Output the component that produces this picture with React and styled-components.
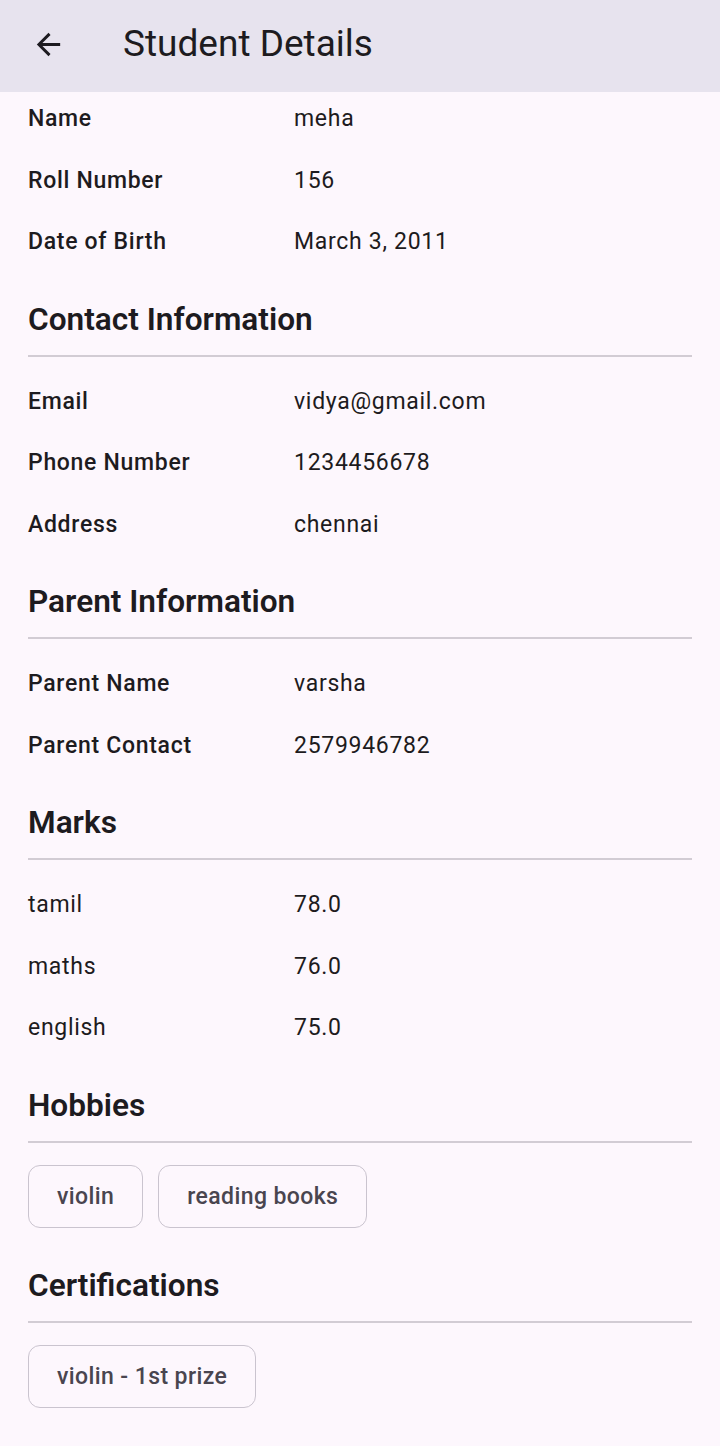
import React from "react";
import styled, { createGlobalStyle } from "styled-components";

const GlobalStyle = createGlobalStyle`
  html, body {
    margin: 0;
    padding: 0;
    background: #fdf7fd;
  }
  body {
    font-family: Roboto, "Noto Sans", "Liberation Sans", sans-serif;
    color: #1d1b20;
  }
`;

const student = {
  basic: [
    ["Name", "meha"],
    ["Roll Number", "156"],
    ["Date of Birth", "March 3, 2011"],
  ],
  contact: [
    ["Email", "vidya@gmail.com"],
    ["Phone Number", "1234456678"],
    ["Address", "chennai"],
  ],
  parent: [
    ["Parent Name", "varsha"],
    ["Parent Contact", "2579946782"],
  ],
  marks: [
    ["tamil", "78.0"],
    ["maths", "76.0"],
    ["english", "75.0"],
  ],
  hobbies: ["violin", "reading books"],
  certifications: ["violin - 1st prize"],
};

function BackIcon() {
  return (
    <svg width="35" height="35" viewBox="0 0 24 24" fill="#1d1b20">
      <path d="M20 11H7.83l5.59-5.59L12 4l-8 8 8 8 1.41-1.41L7.83 13H20v-2z" />
    </svg>
  );
}

function InfoRows({ rows, plain }) {
  return rows.map(([label, value]) => (
    <Row key={label}>
      <Label $plain={plain}>{label}</Label>
      <Value>{value}</Value>
    </Row>
  ));
}

function SectionHeader({ children }) {
  return (
    <>
      <SectionTitle>{children}</SectionTitle>
      <Divider />
    </>
  );
}

export default function App() {
  return (
    <Page>
      <GlobalStyle />
      <AppBar>
        <BackButton>
          <BackIcon />
        </BackButton>
        <Title>Student Details</Title>
      </AppBar>
      <Content>
        <InfoRows rows={student.basic} />

        <SectionHeader>Contact Information</SectionHeader>
        <InfoRows rows={student.contact} />

        <SectionHeader>Parent Information</SectionHeader>
        <InfoRows rows={student.parent} />

        <SectionHeader>Marks</SectionHeader>
        <InfoRows rows={student.marks} plain />

        <SectionHeader>Hobbies</SectionHeader>
        <ChipWrap>
          {student.hobbies.map((h) => (
            <Chip key={h}>{h}</Chip>
          ))}
        </ChipWrap>

        <SectionHeader>Certifications</SectionHeader>
        <ChipWrap>
          {student.certifications.map((c) => (
            <Chip key={c}>{c}</Chip>
          ))}
        </ChipWrap>
      </Content>
    </Page>
  );
}

const Page = styled.div`
  min-height: 100vh;
  background: #fdf7fd;
`;

const AppBar = styled.header`
  height: 92px;
  background: #e7e3ee;
  display: flex;
  align-items: center;
`;

const BackButton = styled.div`
  width: 35px;
  height: 35px;
  margin-left: 31px;
  margin-top: -4px;
  display: flex;
  align-items: center;
  justify-content: center;
`;

const Title = styled.h1`
  margin: -4px 0 0 57px;
  font-size: 37px;
  font-weight: 400;
  color: #1d1b20;
  line-height: 44px;
`;

const Content = styled.main`
  padding: 0 28px 30px;
  margin-top: -4px;
`;

const Row = styled.div`
  height: 61.5px;
  display: flex;
  align-items: center;
  font-size: 23px;
  letter-spacing: 0.7px;
`;

const Label = styled.div`
  width: 266px;
  flex-shrink: 0;
  font-weight: ${(p) => (p.$plain ? 400 : 500)};
  color: #1d1b20;
`;

const Value = styled.div`
  font-weight: 400;
  color: #1d1b20;
`;

const SectionTitle = styled.h2`
  margin: 29px 0 17px;
  font-size: 31.6px;
  line-height: 36px;
  font-weight: 600;
  color: #1d1b20;
`;

const Divider = styled.hr`
  margin: 0 0 14px;
  border: none;
  height: 2px;
  background: #d2ccd4;
`;

const ChipWrap = styled.div`
  display: flex;
  flex-wrap: wrap;
  gap: 15px;
  padding-top: 8px;
  margin-bottom: 40px;
`;

const Chip = styled.div`
  height: 63px;
  box-sizing: border-box;
  padding: 0 28px;
  display: flex;
  align-items: center;
  border: 1.5px solid #cac4cf;
  border-radius: 12px;
  font-size: 23px;
  letter-spacing: 0.4px;
  font-weight: 500;
  color: #49454f;
`;
